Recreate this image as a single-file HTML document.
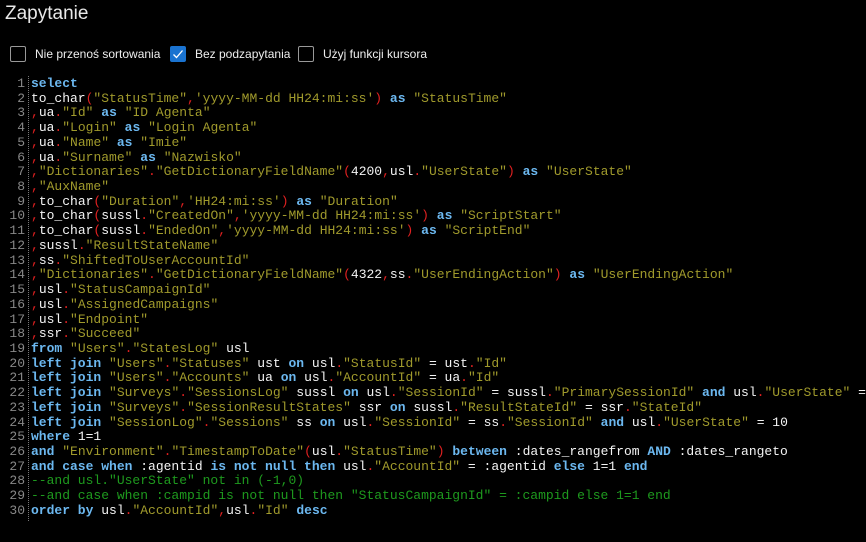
<!DOCTYPE html>
<html><head><meta charset="utf-8"><style>
body{margin:0;background:#000;width:866px;height:542px;overflow:hidden;position:relative;font-family:"Liberation Sans",sans-serif;color:#fff}
.title{position:absolute;left:5px;top:3px;font-size:19px;color:#e8e8e8}
.cb{position:absolute;top:46px;width:14px;height:14px;border:1px solid #999;border-radius:2px}
.cb.on{background:#1a73d0;border-color:#1a73d0}
.lbl{position:absolute;top:47px;font-size:12px;color:#eee}
.code{position:absolute;left:0;top:77px;font-family:"Liberation Mono",monospace;font-size:13px;line-height:14.72px;white-space:pre}
.ln{position:absolute;left:0;width:25px;text-align:right;color:#888}
.gut{position:absolute;left:28px;top:76px;height:445px;border-left:1px dotted #777}
.l{position:absolute;left:31px;color:#f4f4f4}
.k{color:#6cb8f0;font-weight:bold}.s{color:#a09a2c}.p{color:#e02020}.c{color:#1e9a1e}
</style></head><body>
<div class="title">Zapytanie</div>
<div class="cb" style="left:10px"></div><div class="lbl" style="left:35px">Nie przenoś sortowania</div>
<div class="cb on" style="left:170px"><svg width="14" height="14" viewBox="0 0 14 14"><path d="M2.5 7.5l3 3 6-7" stroke="#fff" stroke-width="1.3" fill="none"/></svg></div><div class="lbl" style="left:195px">Bez podzapytania</div>
<div class="cb" style="left:298px"></div><div class="lbl" style="left:323px">Użyj funkcji kursora</div>
<div class="gut"></div>
<div class="code" id="c"></div>
<script>
var L=[
'<span class="k">select</span>',
'to_char<span class="p">(</span><span class="s">"StatusTime"</span><span class="p">,</span><span class="s">\'yyyy-MM-dd HH24:mi:ss\'</span><span class="p">)</span> <span class="k">as</span> <span class="s">"StatusTime"</span>',
'<span class="p">,</span>ua<span class="p">.</span><span class="s">"Id"</span> <span class="k">as</span> <span class="s">"ID Agenta"</span>',
'<span class="p">,</span>ua<span class="p">.</span><span class="s">"Login"</span> <span class="k">as</span> <span class="s">"Login Agenta"</span>',
'<span class="p">,</span>ua<span class="p">.</span><span class="s">"Name"</span> <span class="k">as</span> <span class="s">"Imie"</span>',
'<span class="p">,</span>ua<span class="p">.</span><span class="s">"Surname"</span> <span class="k">as</span> <span class="s">"Nazwisko"</span>',
'<span class="p">,</span><span class="s">"Dictionaries"</span><span class="p">.</span><span class="s">"GetDictionaryFieldName"</span><span class="p">(</span>4200<span class="p">,</span>usl<span class="p">.</span><span class="s">"UserState"</span><span class="p">)</span> <span class="k">as</span> <span class="s">"UserState"</span>',
'<span class="p">,</span><span class="s">"AuxName"</span>',
'<span class="p">,</span>to_char<span class="p">(</span><span class="s">"Duration"</span><span class="p">,</span><span class="s">\'HH24:mi:ss\'</span><span class="p">)</span> <span class="k">as</span> <span class="s">"Duration"</span>',
'<span class="p">,</span>to_char<span class="p">(</span>sussl<span class="p">.</span><span class="s">"CreatedOn"</span><span class="p">,</span><span class="s">\'yyyy-MM-dd HH24:mi:ss\'</span><span class="p">)</span> <span class="k">as</span> <span class="s">"ScriptStart"</span>',
'<span class="p">,</span>to_char<span class="p">(</span>sussl<span class="p">.</span><span class="s">"EndedOn"</span><span class="p">,</span><span class="s">\'yyyy-MM-dd HH24:mi:ss\'</span><span class="p">)</span> <span class="k">as</span> <span class="s">"ScriptEnd"</span>',
'<span class="p">,</span>sussl<span class="p">.</span><span class="s">"ResultStateName"</span>',
'<span class="p">,</span>ss<span class="p">.</span><span class="s">"ShiftedToUserAccountId"</span>',
'<span class="p">,</span><span class="s">"Dictionaries"</span><span class="p">.</span><span class="s">"GetDictionaryFieldName"</span><span class="p">(</span>4322<span class="p">,</span>ss<span class="p">.</span><span class="s">"UserEndingAction"</span><span class="p">)</span> <span class="k">as</span> <span class="s">"UserEndingAction"</span>',
'<span class="p">,</span>usl<span class="p">.</span><span class="s">"StatusCampaignId"</span>',
'<span class="p">,</span>usl<span class="p">.</span><span class="s">"AssignedCampaigns"</span>',
'<span class="p">,</span>usl<span class="p">.</span><span class="s">"Endpoint"</span>',
'<span class="p">,</span>ssr<span class="p">.</span><span class="s">"Succeed"</span>',
'<span class="k">from</span> <span class="s">"Users"</span><span class="p">.</span><span class="s">"StatesLog"</span> usl',
'<span class="k">left join</span> <span class="s">"Users"</span><span class="p">.</span><span class="s">"Statuses"</span> ust <span class="k">on</span> usl<span class="p">.</span><span class="s">"StatusId"</span> = ust<span class="p">.</span><span class="s">"Id"</span>',
'<span class="k">left join</span> <span class="s">"Users"</span><span class="p">.</span><span class="s">"Accounts"</span> ua <span class="k">on</span> usl<span class="p">.</span><span class="s">"AccountId"</span> = ua<span class="p">.</span><span class="s">"Id"</span>',
'<span class="k">left join</span> <span class="s">"Surveys"</span><span class="p">.</span><span class="s">"SessionsLog"</span> sussl <span class="k">on</span> usl<span class="p">.</span><span class="s">"SessionId"</span> = sussl<span class="p">.</span><span class="s">"PrimarySessionId"</span> <span class="k">and</span> usl<span class="p">.</span><span class="s">"UserState"</span> = 3',
'<span class="k">left join</span> <span class="s">"Surveys"</span><span class="p">.</span><span class="s">"SessionResultStates"</span> ssr <span class="k">on</span> sussl<span class="p">.</span><span class="s">"ResultStateId"</span> = ssr<span class="p">.</span><span class="s">"StateId"</span>',
'<span class="k">left join</span> <span class="s">"SessionLog"</span><span class="p">.</span><span class="s">"Sessions"</span> ss <span class="k">on</span> usl<span class="p">.</span><span class="s">"SessionId"</span> = ss<span class="p">.</span><span class="s">"SessionId"</span> <span class="k">and</span> usl<span class="p">.</span><span class="s">"UserState"</span> = 10',
'<span class="k">where</span> 1=1',
'<span class="k">and</span> <span class="s">"Environment"</span><span class="p">.</span><span class="s">"TimestampToDate"</span><span class="p">(</span>usl<span class="p">.</span><span class="s">"StatusTime"</span><span class="p">)</span> <span class="k">between</span> :dates_rangefrom <span class="k">AND</span> :dates_rangeto',
'<span class="k">and case when</span> :agentid <span class="k">is not null then</span> usl<span class="p">.</span><span class="s">"AccountId"</span> = :agentid <span class="k">else</span> 1=1 <span class="k">end</span>',
'<span class="c">--and usl."UserState" not in (-1,0)</span>',
'<span class="c">--and case when :campid is not null then "StatusCampaignId" = :campid else 1=1 end</span>',
'<span class="k">order by</span> usl<span class="p">.</span><span class="s">"AccountId"</span><span class="p">,</span>usl<span class="p">.</span><span class="s">"Id"</span> <span class="k">desc</span>'
];
var h='';for(var i=0;i<L.length;i++){var t=(i*14.72).toFixed(2);h+='<div class="ln" style="top:'+t+'px">'+(i+1)+'</div><div class="l" style="top:'+t+'px">'+L[i]+'</div>';}
document.getElementById('c').innerHTML=h;
</script>
</body></html>
